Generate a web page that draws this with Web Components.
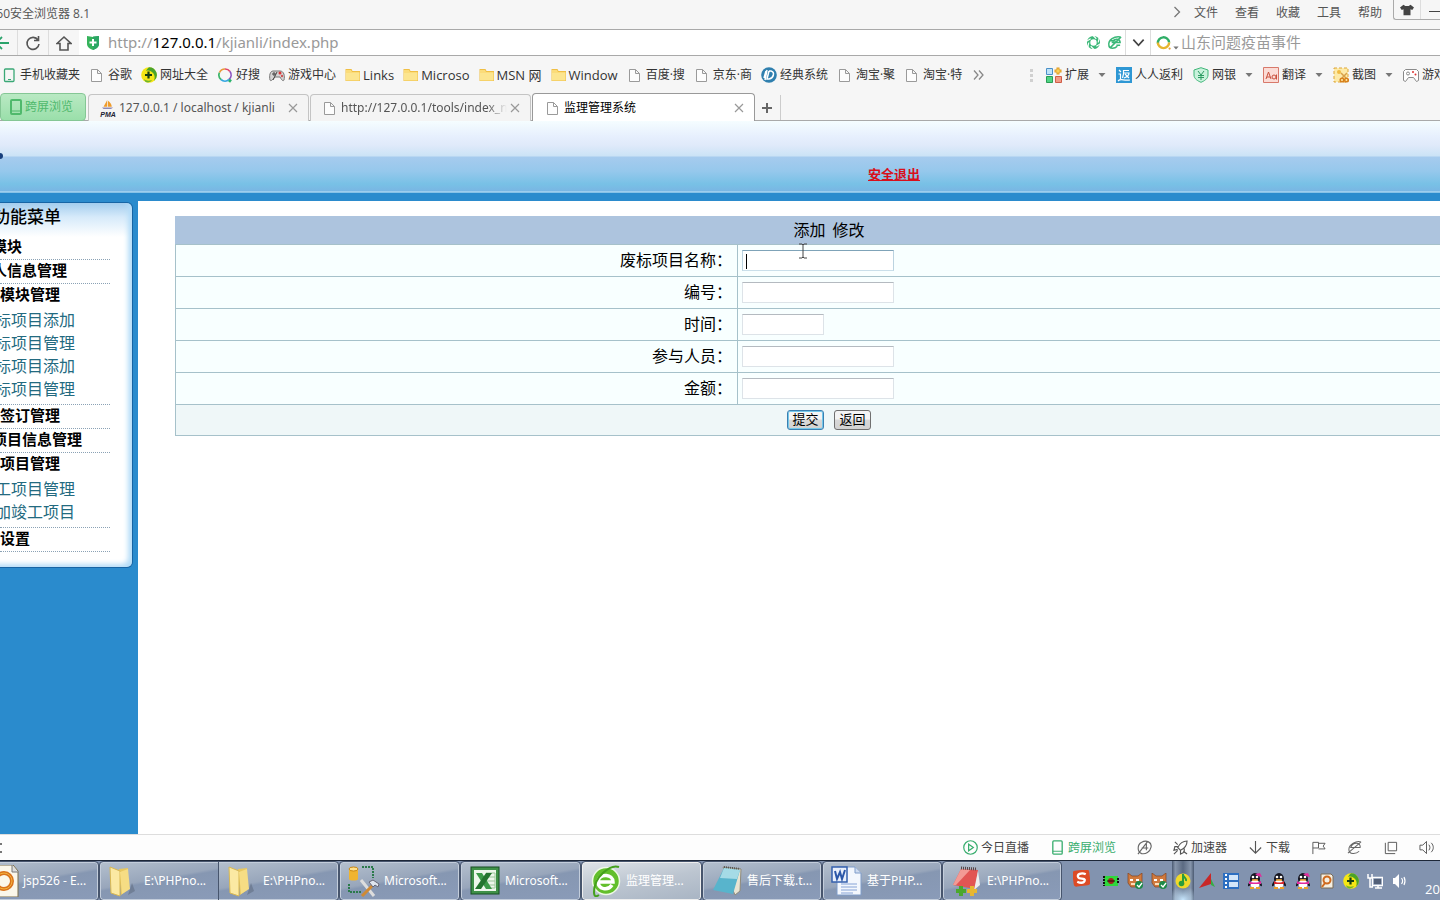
<!DOCTYPE html>
<html lang="zh-CN">
<head>
<meta charset="utf-8">
<title>监理管理系统</title>
<style>
html,body{margin:0;height:100%;overflow:hidden}
body{font:12px/16px "Open Sans","Noto Sans CJK SC",sans-serif;color:#444;background:#fff}
</style>
</head>
<body>
<app-window></app-window>
<script>
const icons = {
phone:'<rect x="3.5" y="2" width="9.500" height="12.500" rx="1" fill="none" stroke="#3aa876" stroke-width="1.300"/><path d="M7 12.500h3" stroke="#3aa876"/>',
phoneg:'<rect x="3" y="1" width="10" height="14" rx="1" fill="none" stroke="#4fb96c" stroke-width="2"/><path d="M4 12h8" stroke="#4fb96c"/>',
file:'<path d="M2.500 2.500h6l4 4v8h-10zM8.500 2.500v4h4" fill="#fdfdfd" stroke="#9a9a9a"/>',
folder:'<path d="M.5 2h6l1 2H15v10H.5z" fill="#f0bf45"/><path d="M1 6h13.500v7.500H1z" fill="#fce58f"/><path d="M1 3h5l1 2h7.500v1H1z" fill="#fbdc7a"/>',
nav360:'<circle cx="8" cy="8" r="7.800" fill="#f6e614"/><path d="M8 .2A7.800 7.800 0 0 1 13 14c1-3 1-6-1-8S8 3 5 4C6 2 7 1 8 .2z" fill="#4aa32b"/><path d="M3 12c2 2 5 2 8 1-1 1.500-2 2-4 2.500-2 0-3.500-1-4-3.500z" fill="#6eb52c"/><path d="M7.500 4.500v7M4 8h7" stroke="#173f12" stroke-width="2.200"/>',
haosou:'<g fill="none" stroke-width="1.700"><path d="M8 2a6 6 0 0 1 5 2.500" stroke="#e0476b"/><path d="M13 4.500a6 6 0 0 1-1 8" stroke="#8a4fc0"/><path d="M12 12.500a6 6 0 0 1-8 0" stroke="#33a6e0"/><path d="M4 12.500A6 6 0 0 1 2.500 5.500" stroke="#3cb56a"/><path d="M2.500 5.500A6 6 0 0 1 8 2" stroke="#e99a3a"/></g><path d="M12 13l2 1.500" stroke="#29b36a" stroke-width="3"/>',
pads:'<path d="M1 13c-1-4 0-9 3-9h7c4 0 5 5 4 9-1 2-3-1-4-3H6c-2 2-4 5-5 3z" fill="#d5d5d5" stroke="#777"/><path d="M3 7h4M5 5v4M4 13l4-8" stroke="#444"/><circle cx="11" cy="6" r="1.500" fill="#d33"/><circle cx="13" cy="9" r="1.200" fill="#c55"/>',
dlogo:'<circle cx="8" cy="8" r="7.800" fill="#2f7fae"/><path d="M8 4h2c4 1 3 7-2 8H6l2-8M5 4L3 11M6 3L4 13" fill="none" stroke="#fff" stroke-width="1.500"/>',
more:'<path d="M3 3.500l4 4.500-4 4.500M8 3.500l4 4.500-4 4.500" fill="none" stroke="#888" stroke-width="1.300"/>',
ext:'<path d="M.5 1.500h6v6h-6z" fill="#bfe3f8" stroke="#4a90c8"/><path d="M.5 9.500h6v6h-6z" fill="#4fd483" stroke="#2a9c55"/><path d="M9.500 9.500h6v6h-6z" fill="#f29b86" stroke="#cf5d47"/><path d="M12 .5v7M8.500 4h7" stroke="#e0971b" stroke-width="3"/><path d="M12 1.500v5M9.500 4h5" stroke="#ffe36b"/>',
fan:'<path d="M0 0h16v16H0z" fill="#2e97d4"/><path d="M3 3l2 2M2.500 7h2v5M2 14c3-3 5 0 12-1M7 3.500h6M7.500 3v4l-1 4M8 6h5c0 2-2 4-5 5M9 7l4 4" fill="none" stroke="#fff" stroke-width="1.200"/>',
yen:'<path d="M8 .7l7 2.300v5c0 4-4 6-7 7.300C5 14 1 12 1 8V3z" fill="#c9f2dc" stroke="#3fb678"/><path d="M5 4l3 4 3-4M8 8v5M5 8.500h6M5 10.500h6" fill="none" stroke="#2d9c63"/>',
trans:'<path d="M.5.500h15v15H.500z" fill="#fbdcd6" stroke="#d8796b"/><path d="M3 12l2.500-7L8 12M4 10h3" fill="none" stroke="#c9503d"/><circle cx="11" cy="10" r="2" fill="none" stroke="#c9503d"/><path d="M13.500 7.500v5" stroke="#c9503d"/>',
cut:'<path d="M1 1h14v14H1z" fill="#fdeaa8" stroke="#dda536" stroke-dasharray="3 2"/><circle cx="6" cy="5" r="2" fill="#f0bb42"/><path d="M8 6l5 5M14 6l-5 5" stroke="#d8a04a" stroke-width="1.500"/><g fill="none" stroke="#d8811c" stroke-width="1.500"><circle cx="9" cy="13" r="1.800"/><circle cx="13.500" cy="13" r="1.800"/></g>',
pad:'<path d="M2.500 2.500h11l2 2v9l-2 1-3-4h-5l-3 4-2-1v-9z" fill="#fff" stroke="#8a8a8a"/><circle cx="5" cy="6.500" r="1.500" fill="none" stroke="#888"/><circle cx="10" cy="5" r="1" fill="#d33"/><circle cx="12.500" cy="7.500" r="1" fill="#d33"/>',
tri2:'<path d="M1 4h14l-7 8z" fill="#777"/>',
dots:'<path d="M7 2h3v3H7zM7 7h3v3H7zM7 12h3v3H7z" fill="#d0d0d0"/>',
back:'<path d="M15 8H2M8 2L2 8l6 6" fill="none" stroke="#2aa36b" stroke-width="1.800"/>',
reload:'<path d="M13 5A6 6 0 1 0 14 9M13.500 1v4.500H9" fill="none" stroke="#555" stroke-width="1.600"/>',
home:'<path d="M1 8.500L8 2l7 6.500h-3V15H4V8.500z" fill="none" stroke="#555" stroke-width="1.600"/>',
shield:'<path d="M2 1l6 1 6-1v8c0 3-3 5-6 6-3-1-6-3-6-6z" fill="#35b35b"/><path d="M8 1.500l6-.5v8c0 3-3 5-6 6z" fill="#2ba665"/><path d="M8 4v7M4.500 7.500h7" stroke="#fff" stroke-width="2"/>',
shutter:'<circle cx="8" cy="8" r="5.200" fill="none" stroke="#3bb878" stroke-width="3.600"/><path d="M7 0l4 4M14 3l-1 5M16 9l-5 3M9 16l-4-4M2 13l1-5M0 7l5-3" stroke="#fff" stroke-width="1.200"/>',
ebolt:'<path d="M14 2C8 1 1 5 2 11c0 4 6 4 9 1M5 8h9c0-4-6-5-8-1M3 14L15 2M3 6h6M10 11h4" fill="none" stroke="#3bb878" stroke-width="1.600"/>',
chev:'<path d="M2.500 5L8 11l5.500-6" fill="none" stroke="#444" stroke-width="1.800"/>',
ring:'<path d="M2 9a6 6 0 0 1 12-1" fill="none" stroke="#2fae67" stroke-width="2.600"/><path d="M2 8a6 6 0 0 0 12 0" fill="none" stroke="#e6b52e" stroke-width="2.600"/><circle cx="14.500" cy="14.500" r="1.200" fill="#e6a02e"/>',
gt:'<path d="M5.500 3l5 5-5 5" fill="none" stroke="#777" stroke-width="1.300"/>',
shirt:'<path d="M4 2l2 1.500h4L12 2l4 3-2 3-2-1v7H4V7L2 8 0 5z" fill="#444"/>',
pma:'<path d="M7 0v9H2zM8 1c3 2 5 5 5 8H8z" fill="#ef9c2c"/><path d="M0 10h15l-3 2H2z" fill="#8d89b3"/>',
x:'<path d="M4 4l8 8M12 4l-8 8" stroke="#999" stroke-width="1.200"/>',
plus:'<path d="M8 3v10M3 8h10" stroke="#666" stroke-width="2"/>',
live:'<circle cx="8" cy="8" r="7.200" fill="none" stroke="#38ad6e" stroke-width="1.300"/><path d="M6 4.500v7l5-3.500z" fill="none" stroke="#38ad6e" stroke-width="1.300"/>',
phone2:'<rect x="3" y="1" width="10" height="14" rx="1" fill="none" stroke="#38ad6e" stroke-width="1.400"/><path d="M3 12h10" stroke="#38ad6e"/>',
accel:'<path d="M5 14.500C0 13 0 5 5 2.500c5-3 11 0 10 5-1 5-6 8-10 7zM1 15L11 2M5 8.500h7M10 3v8" fill="none" stroke="#666" stroke-width="1.200"/>',
rocket:'<path d="M15 1c-5 0-8 3-10 7l3 3c4-2 7-5 7-10zM5 7H2l-1 4 4-1M8 11v4l4-2 0-4M1 15l4-4M2 2l3 3M11 12l4 3" fill="none" stroke="#555" stroke-width="1.200"/>',
down:'<path d="M8 1v13M2 8l6 6 6-6" fill="none" stroke="#555" stroke-width="1.200"/>',
flag:'<path d="M2 15V2.500h6v6H2M8 3.500h7l-2 3 2 3H8" fill="none" stroke="#555"/>',
ie:'<path d="M15 2c-5-2-13 3-13 8 0 6 8 5 11 2M4 8h10c1-6-8-6-10 0zM1 14L15 2" fill="none" stroke="#666" stroke-width="1.100"/>',
win:'<path d="M5.500 2.500h9v9h-9zM2.500 3v11.500H13" fill="none" stroke="#555"/>',
spk:'<path d="M1 5.500h3l4-4v13l-4-4H1zM10.500 5c1.500 2 1.500 4 0 6M13 3c3 3 3 7 0 10" fill="none" stroke="#555"/>',
ibeam:'<path d="M4 1h3l1 1 1-1h3M8 2v12M4 15h3l1-1 1 1h3" fill="none" stroke="#444"/>',
/* taskbar */
outlook:'<path d="M1 0h25l5 6v26H1z" fill="#fbf7ea" stroke="#7b6c4a"/><path d="M25 0v7h6" fill="#ddd" stroke="#777"/><circle cx="17" cy="16" r="8" fill="none" stroke="#d9731c" stroke-width="4"/><circle cx="17" cy="16" r="8" fill="none" stroke="#f5b43c"/>',
folders:'<path d="M20 30l7-4-3-8z" fill="#59657a" opacity=".5"/><path d="M11 4l9-1v22l-7 5z" fill="#e8c860"/><path d="M2 2l10 4v25L3 28z" fill="#fbe9a3" stroke="#d9b852"/><path d="M12 7l8-3 2 20-8 5z" fill="#f6dd84"/>',
tools:'<path d="M1 4v10c0 2 9 2 9 0V4" fill="#f0b431"/><ellipse cx="5.500" cy="4" rx="4.500" ry="2" fill="#ffe08a" stroke="#c98612"/><path d="M14 2h11v11M1 19v8h12" fill="none" stroke="#2b7a4b" stroke-width="2" stroke-dasharray="2 1"/><path d="M13 15l13 16" stroke="#ddd" stroke-width="3"/><path d="M27 18L14 31" stroke="#cf8a34" stroke-width="3"/><path d="M21 17l4-2 6 4-1 3-3-2-2 2z" fill="#dfe6ee" stroke="#667"/>',
excel:'<rect x="2" y="2" width="28" height="27" fill="#3f9148" stroke="#174f22"/><rect x="5" y="5" width="22" height="21" fill="#eef7ec"/><path d="M17 8h9v15h-9M17 12h9M17 16h9M17 20h9" fill="none" stroke="#9cc79b"/><path d="M7 8h6l10 16h-6z" fill="#3c9a48"/><path d="M17 8h6L12 24H6z" fill="#24752f"/>',
e360:'<circle cx="16" cy="16" r="13.500" fill="#62bf2c" stroke="#eef8e6" stroke-width="1.500"/><path d="M8 17h15c0-8-13-9-15-1 0 9 10 10 14 4" fill="none" stroke="#fff" stroke-width="3.500"/><path d="M29 2C20-1 4 12 4 27c0 5 2 5 5 3" fill="none" stroke="#44a01d" stroke-width="2"/>',
notepad:'<path d="M12 2l18 2-1 22-5 4z" fill="#e9e4d2" stroke="#8e8a7b"/><path d="M13 3l16 2-7 24L2 25z" fill="#58b4cc"/><path d="M13 3l16 2-3 9-17-1z" fill="#a5dbe6"/><path d="M13 2l16 2" stroke="#555" stroke-width="2" stroke-dasharray="1 1"/>',
word:'<path d="M6 2h18l6 6v22H6z" fill="#f3f7fd" stroke="#7e9cc9"/><path d="M24 2v6h6" fill="#cfdcf0" stroke="#7e9cc9"/><path d="M10 19h16M10 22h16M10 25h16M10 28h12" stroke="#86a3d6"/><rect x="1" y="2" width="15" height="15" fill="#e8effb" stroke="#3560ad" stroke-width="1.500"/><path d="M4 6l2 8 3-7 2 7 3-9" fill="none" stroke="#2b57a8" stroke-width="2"/>',
notepp:'<path d="M10 4l17 1-3 19-22-4z" fill="#e25553"/><path d="M10 4l9 1L5 20H2z" fill="#f39a94"/><path d="M27 6l2 14-6 5z" fill="#eee"/><path d="M10 3l16 1" stroke="#544" stroke-width="3" stroke-dasharray="1 1"/><path d="M10 21v10M5 26h10" stroke="#4ba82c" stroke-width="4"/><path d="M21 21v10M16 26h10" stroke="#e7b731" stroke-width="4"/>',
/* tray */
sogou:'<rect width="16" height="15" rx="3" fill="#dd4b25" transform="rotate(-8 8 8)"/><path d="M12 4C8 2 3 4 5 7c1 2 7 0 6 3-1 3-5 2-7 1" fill="none" stroke="#fff" stroke-width="2.200"/>',
chip:'<rect x="1" y="3" width="14" height="10" fill="#2ed83c"/><path d="M1 3v10M15 5v6" stroke="#111" stroke-width="2" stroke-dasharray="2 1"/><circle cx="8" cy="8" r="3" fill="#a2251b"/><path d="M4 8h8" stroke="#211"/>',
cat:'<path d="M1 0l4 3h6l4-3v10l-3 4H4l-3-4z" fill="#d07a3e" stroke="#87421b" stroke-width=".7"/><path d="M3 7h3M9 7h3" stroke="#fff" stroke-width="2"/><path d="M4 11h5" stroke="#ffdcb8" stroke-width="2"/><circle cx="12" cy="12" r="4" fill="#1d8a49"/><path d="M10 12l2 2 3-4" fill="none" stroke="#fff" stroke-width="1.300"/>',
music:'<circle cx="8" cy="8" r="7.500" fill="#f0d92a"/><path d="M8 1v9M8 2c1 3 4 3 3 6" fill="none" stroke="#2b9d3b" stroke-width="2"/><circle cx="6.500" cy="10.500" r="2.800" fill="#2b9d3b"/>',
sail:'<path d="M0 15L12 0v11z" fill="#c82828"/><path d="M12 6l4 8-4-2z" fill="#36ae43"/>',
film:'<path d="M0 0h16v16H0z" fill="#2d6fc1"/><path d="M6 2h9v5H6zM6 9h9v5H6z" fill="#d3e6fa"/><path d="M3 1v15" stroke="#fff" stroke-width="2" stroke-dasharray="2 2"/>',
qq:'<ellipse cx="8" cy="6" rx="5" ry="6" fill="#151520"/><path d="M3 8c-3 4-2 6-1 5l2-1M13 8c3 4 2 6 1 5l-2-1" fill="#151520"/><ellipse cx="8" cy="11" rx="4.500" ry="4.500" fill="#fff"/><path d="M3 8c3 2 7 2 10 0v3H3z" fill="#d8262c"/><path d="M3 15h4M9 15h4" stroke="#eea12a" stroke-width="2"/><circle cx="6" cy="4" r="1.300" fill="#fff"/><circle cx="10" cy="4" r="1.300" fill="#fff"/><path d="M5 7h6" stroke="#f0a62a" stroke-width="1.500"/>',
qqf:'<ellipse cx="8" cy="6" rx="5" ry="6" fill="#151520"/><path d="M3 8c-3 4-2 6-1 5l2-1M13 8c3 4 2 6 1 5l-2-1" fill="#151520"/><ellipse cx="8" cy="11" rx="4.500" ry="4.500" fill="#fff"/><path d="M2 8c3 2 9 2 12 0v3H2z" fill="#e22b9d"/><path d="M8 1l5-1 2 4-4-1z" fill="#e22b9d"/><path d="M3 15h4M9 15h4" stroke="#eea12a" stroke-width="2"/><circle cx="6" cy="4" r="1.300" fill="#fff"/><circle cx="10" cy="4" r="1.300" fill="#fff"/><path d="M5 7h6" stroke="#f0a62a" stroke-width="1.500"/>',
search:'<path d="M2 1h10l2 2v12H2z" fill="#f5efe2" stroke="#7a6a55"/><circle cx="8" cy="7" r="3.500" fill="none" stroke="#cf6a1e" stroke-width="2"/><path d="M6 10l-3 4" stroke="#cf6a1e" stroke-width="2"/>',
net:'<path d="M5.500 4.500h10v8h-10zM8 15h7M11 12v3M1 1v4h4V1M3 5v9h3" fill="none" stroke="#fff" stroke-width="1.500"/><path d="M7 6h7v5H7z" fill="#526078"/>',
vol:'<path d="M2 5h2l4-4v14l-4-4H2z" fill="#fff"/><path d="M10.500 5c1.500 2 1.500 4 0 6M13 4c1.500 3 1.500 5 0 8" fill="none" stroke="#fff" stroke-width="1.200"/>'
};
const define = (name, css, html) => customElements.define(name, class extends HTMLElement {
  constructor(){ super(); this.attachShadow({mode:'open'}).innerHTML = `<style>*{box-sizing:border-box}${css}</style>${html}`; }
});
customElements.define('ui-icon', class extends HTMLElement {
  connectedCallback(){
    if (this.shadowRoot) return;
    const big = this.hasAttribute('big');
    this.attachShadow({mode:'open'}).innerHTML = `<style>:host{display:block;flex:none;width:var(--icon,16px);height:var(--icon,16px)}svg{display:block;width:100%;height:100%}</style><svg aria-hidden="true" viewBox="0 0 ${big?'32 32':'16 16'}">${icons[this.getAttribute('name')]||''}</svg>`;
  }
});
customElements.define('icon-link', class extends HTMLElement {
  connectedCallback(){
    if (this.shadowRoot) return;
    this.attachShadow({mode:'open'}).innerHTML = `<style>:host{display:block;flex:none}a{display:flex;align-items:center;gap:3px;color:inherit;text-decoration:none;white-space:nowrap}:host([latin]){font-size:13px}:host([latin]) a{gap:2px}.arrow{margin-left:6px;--icon:8px}</style><a href="#"><ui-icon name="${this.getAttribute('icon')}"></ui-icon><slot></slot>${this.hasAttribute('menu')?'<ui-icon class="arrow" name="tri2"></ui-icon>':''}</a>`;
  }
});

define('title-bar',`
:host{display:flex;justify-content:space-between;height:29px;background:#f6f6f6;overflow:hidden;color:#555}
.name{display:flex;justify-content:flex-end;width:90px;padding-top:6px;white-space:nowrap}
nav{display:flex;align-items:flex-start;width:271px;gap:17px;white-space:nowrap}
a{color:inherit;text-decoration:none;padding-top:5px}
ui-icon{margin:4px -8px 0 0}
.win{display:flex;flex:none;margin-left:-6px;width:50px;height:20px;border:1px solid #aaa;border-width:0 0 1px 1px;border-radius:0 0 0 3px}
.win button{border:0;background:none;padding:0;width:28px;height:19px;border-right:1px solid #ddd}
.win button ui-icon{margin:1px 6px 0;--icon:14px}
.win .min{border:0;padding-left:8px}
.min i{display:block;height:1px;background:#444;margin-top:4px}
`,`<span class="name">60安全浏览器 8.1</span><nav><ui-icon name="gt"></ui-icon><a href="#">文件</a><a href="#">查看</a><a href="#">收藏</a><a href="#">工具</a><a href="#">帮助</a><div class="win"><button aria-label="皮肤"><ui-icon name="shirt"></ui-icon></button><button class="min" aria-label="最小化"><i></i></button></div></nav>`);

define('address-bar',`
:host{display:flex;height:27px;border:1px solid #a9a9a9;border-width:1px 0;background:#fff;align-items:center;overflow:hidden}
.nav{display:flex;flex:none;width:79px;height:25px;background:#f6f6f6}
button{border:0;background:none;padding:0;height:25px;display:flex;align-items:center;justify-content:center}
.nav button{width:31px;border-left:1px solid #ddd}.nav button.b{width:17px;border:0;justify-content:flex-end;padding-right:7px}
.url{flex:1;display:flex;align-items:center;gap:7px;padding-left:6px;font:15px/22px "Noto Sans",sans-serif;color:#999;white-space:nowrap}
.url b{font-weight:400;color:#000}
.url span{padding-bottom:2px}
.r{display:flex;flex:none;align-items:center;width:357px;--icon:15px}
.r>button{width:21px}.r .d{width:26px;border:1px solid #ddd;border-width:0 1px;margin:0 5px 0 0}
.tri{--icon:6px;margin:10px 2px 0}
input{border:0;outline:0;padding:0 0 2px;flex:1;min-width:0;font:15px/20px "Open Sans","Noto Sans CJK SC",sans-serif;color:#999;background:none}
`,`<div class="nav"><button class="b" aria-label="后退"><ui-icon name="back"></ui-icon></button><button aria-label="刷新"><ui-icon name="reload"></ui-icon></button><button aria-label="主页"><ui-icon name="home"></ui-icon></button></div>
<div class="url" role="textbox" aria-label="地址"><ui-icon name="shield"></ui-icon><span>http://<b>127.0.0.1</b>/kjianli/index.php</span></div>
<div class="r"><button aria-label="极速"><ui-icon name="shutter"></ui-icon></button><button aria-label="内核"><ui-icon name="ebolt"></ui-icon></button><button class="d" aria-label="展开"><ui-icon name="chev"></ui-icon></button><ui-icon name="ring"></ui-icon><ui-icon class="tri" name="tri2"></ui-icon><input aria-label="搜索" value="山东问题疫苗事件"></div>`);

define('bookmarks-bar',`
:host{display:flex;height:37px;background:#f6f6f6;overflow:hidden;align-items:center;color:#333}
.l,.r{display:flex;align-items:center;gap:9px}.l{flex:1;min-width:0;padding-left:1px}
.r{flex:none;width:417px;gap:10px}
.r ui-icon{margin-right:-3px}
`,`<div class="l"><icon-link icon="phone">手机收藏夹</icon-link><icon-link icon="file">谷歌</icon-link><icon-link icon="nav360">网址大全</icon-link><icon-link icon="haosou">好搜</icon-link><icon-link icon="pads">游戏中心</icon-link><icon-link latin icon="folder">Links</icon-link><icon-link latin icon="folder">Microso</icon-link><icon-link latin icon="folder">MSN 网</icon-link><icon-link latin icon="folder">Window</icon-link><icon-link icon="file">百度·搜</icon-link><icon-link icon="file">京东·商</icon-link><icon-link icon="dlogo">经典系统</icon-link><icon-link icon="file">淘宝·聚</icon-link><icon-link icon="file">淘宝·特</icon-link><ui-icon name="more"></ui-icon></div>
<div class="r"><ui-icon name="dots"></ui-icon><icon-link menu icon="ext">扩展</icon-link><icon-link icon="fan">人人返利</icon-link><icon-link menu icon="yen">网银</icon-link><icon-link menu icon="trans">翻译</icon-link><icon-link menu icon="cut">截图</icon-link><icon-link icon="pad">游戏</icon-link></div>`);

customElements.define('browser-tab', class extends HTMLElement {
  connectedCallback(){
    if (this.shadowRoot) return;
    this.attachShadow({mode:'open'}).innerHTML = `<style>*{box-sizing:border-box}
:host{display:flex;align-items:center;flex:none;width:221px;height:27px;padding:0 7px 0 11px;border:1px solid #c4c4c4;border-bottom:0;border-radius:4px 4px 0 0;background:#f4f4f4;color:#555;font:12px/16px "Noto Sans","Noto Sans CJK SC",sans-serif}
:host([active]){height:28px;background:#fff;color:#000;width:223px;padding-left:12px;border-color:#999}
a{flex:1;min-width:0;display:flex;align-items:center;gap:3px;color:inherit;text-decoration:none}
span{overflow:hidden;white-space:nowrap}
.fade span{-webkit-mask:linear-gradient(90deg,#000 88%,transparent)}
button{border:0;background:none;padding:0}.pic{display:flex;flex-direction:column;width:16px;align-items:center}
.pic ui-icon{--icon:12px}.pic i{font:italic 700 7px/5px "Liberation Sans",sans-serif;color:#223}</style>
<a href="#" class="${this.hasAttribute('fade')?'fade':''}">${this.hasAttribute('pma')?'<div class="pic"><ui-icon name="pma"></ui-icon><i>PMA</i></div>':'<ui-icon name="file"></ui-icon>'}<span><slot></slot></span></a><button aria-label="关闭"><ui-icon name="x"></ui-icon></button>`;
  }
});
define('tab-strip',`
:host{display:flex;align-items:flex-end;gap:2px;height:28px;background:linear-gradient(#a9a9a9,#a9a9a9) 0 100%/100% 1px no-repeat #f6f6f6;overflow:hidden}
.cross{flex:none;display:flex;align-items:center;gap:1px;width:86px;height:28px;padding:0 0 0 7px;border:1px solid #85c795;border-radius:4px;background:linear-gradient(#b9e9c3,#9adfaa);color:#4fb96c;font:12px/16px "Open Sans","Noto Sans CJK SC",sans-serif}
.add{border:0;background:none;border-right:1px solid #ccc;width:26px;height:25px;padding:0 0 0 4px;margin:0 0 1px -2px}
.t{display:flex;align-items:flex-end;gap:1px}
`,`<button class="cross"><ui-icon name="phoneg"></ui-icon>跨屏浏览</button><div class="t"><browser-tab pma>127.0.0.1 / localhost / kjianli</browser-tab><browser-tab fade>http://127.0.0.1/tools/index_n</browser-tab><browser-tab active>监理管理系统</browser-tab></div><button class="add" aria-label="新标签"><ui-icon name="plus"></ui-icon></button>`);

define('page-header',`
:host{display:grid;grid-template-columns:1fr 572px;height:80px;border-bottom:8px solid #2b8bcd;background:linear-gradient(#f5fdff 0,#e6effd 16px,#e0eafa 24px,#cbe3f6 35px,#a6cbee 36px,#96c8ec 50px,#78c1e6 63px,#79b6e3 70px,#c3e4f7 71px,#4ba0d8 72px)}
.logo{width:3px;height:6px;margin-top:32px;border-radius:0 3px 3px 0;background:#173f7c}
a{justify-self:start;margin-top:44px;font-size:13px;line-height:18px;font-weight:700;color:#d8101c}
`,`<div class="logo"></div><a href="#">安全退出</a>`);

define('menu-group',`
:host{display:block;width:110px;border-bottom:1px dotted #8ba2b5}
h3{margin:0;display:flex;justify-content:flex-end;width:var(--edge,60px);height:23px;font-size:15px;line-height:21px;font-weight:700;color:#000;white-space:nowrap}
`,`<h3><slot name="title"></slot></h3><slot></slot>`);
define('menu-links',`:host{display:block;padding:2px 0 3px;width:75px}`,`<slot></slot>`);
define('menu-link',`:host{display:flex;justify-content:flex-end;height:23px}a{font-size:16px;line-height:22px;color:#236a80;text-decoration:none;white-space:nowrap}`,`<a href="#"><slot></slot></a>`);
define('side-menu',`
:host{display:block;flex:none;width:138px;background:#2a8bcd;padding-top:1px;overflow:hidden}
nav{width:133px;height:366px;border:1px solid #1765a5;border-left:0;border-radius:0 6px 6px 0;background:linear-gradient(#a3cdee,#d6eafa 14px,#fff 34px);box-shadow:inset -5px -4px 5px -1px #b5ddf8}
h2{margin:0;display:flex;justify-content:flex-end;width:61px;height:33px;font-size:17px;line-height:28px;font-weight:500;color:#000;white-space:nowrap}
`,`<nav><h2>功能菜单</h2>
<menu-group style="--edge:22px"><span slot="title">模块</span></menu-group>
<menu-group style="--edge:67px"><span slot="title">人信息管理</span></menu-group>
<menu-group><span slot="title">模块管理</span><menu-links><menu-link>标项目添加</menu-link><menu-link>标项目管理</menu-link><menu-link>标项目添加</menu-link><menu-link>标项目管理</menu-link></menu-links></menu-group>
<menu-group><span slot="title">签订管理</span></menu-group>
<menu-group style="--edge:82px"><span slot="title">项目信息管理</span></menu-group>
<menu-group><span slot="title">项目管理</span><menu-links><menu-link>工项目管理</menu-link><menu-link>加竣工项目</menu-link></menu-links></menu-group>
<menu-group style="--edge:30px"><span slot="title">设置</span></menu-group></nav>`);

const row=(id,label,cls='')=>`<tr><td class="l"><label for="${id}">${label}：</label></td><td><input id="${id}" class="${cls}"></td></tr>`;
define('edit-form',`
:host{display:block;flex:1;min-width:0;overflow:hidden;padding:15px 0 0 37px;background:#fff}
form{margin:0 -43px 0 0;position:relative}
table{width:100%;border-collapse:collapse;table-layout:fixed;font:16px/22px "Noto Sans CJK SC",sans-serif;color:#000}
td,th{border:1px solid #a6c1ca;padding:0 4px;height:32px;background:#f8ffff}
th{height:28px;padding-bottom:4px;font-weight:400;background:#adc4de;border-color:#adc4de #adc4de #a6c1ca}
.l{text-align:right;padding:0 5px 4px 0}
input{display:block;width:152px;height:21px;border:1px solid #dde3e8;border-top-color:#b4bac0;padding:0 2px;background:#fff;font-size:14px}
.short{width:82px}
.on{border-color:#7fa3b8 #bcd3e0 #cadfea;background:linear-gradient(#000,#000) 3px 3px/1px 15px no-repeat #fff}
.f{background:#eff7f8;height:31px}
.f div{display:flex;justify-content:center;gap:10px}
button{width:37px;height:20px;padding:0 0 2px;border:1px solid #707070;border-radius:3px;background:linear-gradient(#f4f4f4 45%,#d8d8d8 50%,#d2d2d2);font:13px/16px "Noto Sans CJK SC",sans-serif;color:#000}
button.main{border-color:#3c7fb1;box-shadow:inset 0 0 0 1px #74c8ea}
.cur{position:absolute;left:620px;top:27px}
`,`<form><table><colgroup><col style="width:43%"><col></colgroup><thead><tr><th colspan="2">添加&nbsp; 修改</th></tr></thead><tbody>${row('name','废标项目名称','on')}${row('no','编号')}${row('date','时间','short')}${row('people','参与人员')}${row('sum','金额')}<tr><td class="f" colspan="2"><div><button type="submit" class="main">提交</button><button type="button">返回</button></div></td></tr></tbody></table><ui-icon class="cur" name="ibeam"></ui-icon></form>`);

define('status-bar',`
:host{display:flex;align-items:center;justify-content:space-between;height:26px;border-top:1px solid #ddd;background:#fdfdfd;overflow:hidden;color:#444}
.m{width:2px;height:10px;border-top:2px solid #777;border-bottom:2px solid #777}
div{flex:none;display:flex;gap:21px;width:477px;--icon:15px}
.g{color:#38ad6e}
`,`<span class="m"></span><div><icon-link icon="live">今日直播</icon-link><icon-link class="g" icon="phone2">跨屏浏览</icon-link><ui-icon name="accel"></ui-icon><icon-link icon="rocket">加速器</icon-link><icon-link icon="down">下载</icon-link><ui-icon name="flag"></ui-icon><ui-icon name="ie"></ui-icon><ui-icon name="win"></ui-icon><ui-icon name="spk"></ui-icon></div>`);

customElements.define('task-button', class extends HTMLElement {
  connectedCallback(){
    if (this.shadowRoot) return;
    this.attachShadow({mode:'open'}).innerHTML = `<style>*{box-sizing:border-box}:host{display:block;flex:none;width:119px;height:38px;--icon:32px}
button{display:flex;align-items:center;gap:4px;width:100%;height:100%;padding:0 0 0 7px;border:1px solid #c3cddb;border-radius:3px;background:linear-gradient(170deg,#b3bfcd 0,#98a6bb 45%,#8697b2 50%,#8a9bb8);outline:1px solid #47556d;color:#fff;font:12px/18px "Noto Sans","Noto Sans CJK SC",sans-serif;white-space:nowrap;text-align:left}
:host([active]) button{background:linear-gradient(170deg,#dde2e7,#bcc5d0 50%,#a9b5c4);border-color:#eee}
:host([first]) button{border-right-color:#9fadc1;border-radius:3px 0 0 3px}
:host([second]) button{border-left:0;padding-left:8px;border-radius:0 3px 3px 0}
:host([second]){margin-left:-2px}:host([narrow]){width:118px}</style><button><ui-icon big name="${this.getAttribute('icon')}"></ui-icon><span><slot></slot></span></button>`;
  }
});
define('task-bar',`
:host{display:flex;height:40px;border-top:1px solid #1d2738;background:#8293af;overflow:hidden}
.b{display:flex;flex:none;gap:2px;margin-left:-21px;padding-top:1px}
.t{flex:1;min-width:0;display:flex;align-items:center;padding-left:8px;white-space:nowrap;color:#fff}
.t>div{flex:none;width:24px;height:39px;display:flex;align-items:center;justify-content:center}
.t .s{width:30px;padding:0 6px 4px 0;--icon:17px}
.t .hot{width:22px;margin:0 1px;background:radial-gradient(circle at 50% 100%,#c9e8ff 0,transparent 36%),linear-gradient(90deg,#4b5a72,#8695ab 15%,#5b6a82 50%,#8695ab 85%,#4b5a72)}
.clock{align-self:flex-end;font-size:13px;line-height:22px;margin-left:14px}
`,`<div class="b"><task-button icon="outlook">jsp526 - E...</task-button><task-button first icon="folders">E:\\PHPno...</task-button><task-button second icon="folders">E:\\PHPno...</task-button><task-button icon="tools">Microsoft...</task-button><task-button icon="excel">Microsoft...</task-button><task-button active icon="e360">监理管理...</task-button><task-button narrow icon="notepad">售后下载.t...</task-button><task-button narrow icon="word">基于PHP...</task-button><task-button narrow icon="notepp">E:\\PHPno...</task-button></div>
<div class="t"><div class="s"><ui-icon name="sogou"></ui-icon></div>${['chip','cat','cat','music','sail','film','qqf','qq','qqf','search','nav360','net','vol'].map(n=>`<div class="${n==='music'?'hot':''}"><ui-icon name="${n}"></ui-icon></div>`).join('')}<span class="clock">20</span></div>`);

define('app-window',`
:host{display:flex;flex-direction:column;height:100vh;overflow:hidden}
main{flex:1;min-height:0;display:flex}
`,`<title-bar></title-bar><address-bar></address-bar><bookmarks-bar></bookmarks-bar><tab-strip></tab-strip><page-header></page-header><main><side-menu></side-menu><edit-form></edit-form></main><status-bar></status-bar><task-bar></task-bar>`);
</script>
</body>
</html>
